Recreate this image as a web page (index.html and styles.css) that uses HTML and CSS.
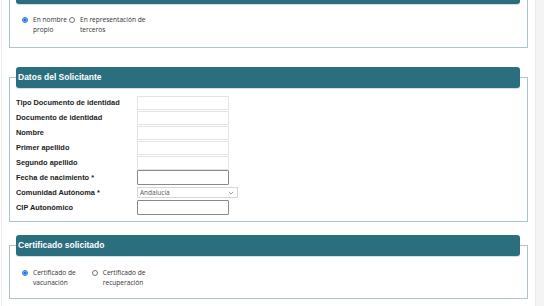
FILE: index.html
```
<!DOCTYPE html>
<html lang="es">
<head>
  <meta charset="UTF-8" />
  <meta name="viewport" content="width=device-width, initial-scale=1.0"/>
  <title>Certificado COVID</title>
  <link rel="stylesheet" href="styles.css">
</head>
<body>
  <div class="pagina">
    <fieldset class="bloque bloque-primero">
      <legend></legend>
      <div class="opciones">
        <label class="opcion"><input type="radio" name="tipo" checked><span>En nombre<br>propio</span></label>
        <label class="opcion"><input type="radio" name="tipo"><span>En representación de<br>terceros</span></label>
      </div>
    </fieldset>

    <fieldset class="bloque bloque-datos">
      <legend>Datos del Solicitante</legend>
      <div class="filas">
        <label>Tipo Documento de identidad</label>
        <input type="text" class="campo">
        <label>Documento de identidad</label>
        <input type="text" class="campo">
        <label>Nombre</label>
        <input type="text" class="campo">
        <label>Primer apellido</label>
        <input type="text" class="campo">
        <label>Segundo apellido</label>
        <input type="text" class="campo">
        <label>Fecha de nacimiento *</label>
        <input type="text" class="campo campo-editable">
        <label>Comunidad Autónoma *</label>
        <div class="selector">
          <select>
            <option>Andalucía</option>
          </select>
          <svg class="flecha" width="6" height="4" viewBox="0 0 6 4"><path d="M0.8 0.8 L3 3 L5.2 0.8" fill="none" stroke="#888" stroke-width="0.8"/></svg>
        </div>
        <label>CIP Autonómico</label>
        <input type="text" class="campo campo-editable">
      </div>
    </fieldset>

    <fieldset class="bloque bloque-certificado">
      <legend>Certificado solicitado</legend>
      <div class="opciones separadas">
        <label class="opcion"><input type="radio" name="cert" checked><span>Certificado de<br>vacunación</span></label>
        <label class="opcion"><input type="radio" name="cert"><span>Certificado de<br>recuperación</span></label>
      </div>
    </fieldset>
  </div>
  <div class="barra"></div>
</body>
</html>
```

FILE: styles.css
```
html, body {
  height: 100%;
}
body {
  margin: 0;
  display: flex;
  background: #ffffff;
  font-family: 'Liberation Sans', Arial, sans-serif;
  color: #222;
  overflow: hidden;
}
.pagina {
  flex: 1;
  margin-left: 1px;
  border-left: 1px solid #ececec;
  padding: 0 7px 0 7px;
}
.barra {
  width: 8px;
  background: #f4f4f4;
  border-left: 1px solid #ebebeb;
}

.bloque {
  border: 1px solid #a9c4cb;
  margin: 0;
  padding: 0 7px 0 6px;
}
.bloque legend {
  box-sizing: border-box;
  width: 100%;
  height: 21px;
  line-height: 21px;
  padding: 0 2px;
  background: #2b6e7e;
  color: #fff;
  font-weight: bold;
  font-size: 8.5px;
  border-radius: 3px;
  box-shadow: 0 1px 0 #cfe0e4;
}
.bloque-primero {
  margin-top: -17px;
  padding-top: 11px;
  padding-bottom: 12px;
}
.bloque-datos {
  margin-top: 19px;
  padding-top: 7px;
  padding-bottom: 6px;
}
.bloque-certificado {
  margin-top: 13px;
  padding-top: 12px;
  padding-bottom: 10px;
}

.opciones {
  display: flex;
  gap: 2px;
  padding-left: 6px;
  font-family: 'Open Sans', 'Noto Sans', sans-serif;
  font-size: 6.6px;
  line-height: 10px;
  color: #333;
}
.opciones.separadas {
  gap: 16px;
}
.opcion {
  display: flex;
  align-items: flex-start;
}
.opcion input {
  width: 6px;
  height: 6px;
  margin: 2px 5px 0 0;
  accent-color: #1a73e8;
}

.filas {
  display: grid;
  grid-template-columns: 121px auto;
  grid-auto-rows: 15px;
  align-items: center;
  justify-items: start;
}
.filas label {
  font-size: 7.4px;
  font-weight: bold;
  color: #222;
}
.campo {
  box-sizing: border-box;
  width: 92px;
  height: 14px;
  margin: 0;
  padding: 0 2px;
  border: 1px solid #e3e3e3;
  background: #fff;
}
.campo-editable {
  height: 15px;
  border-color: #8a8a8a;
  border-radius: 1px;
}
.selector {
  position: relative;
  display: flex;
}
.selector select {
  appearance: none;
  box-sizing: border-box;
  width: 101px;
  height: 11px;
  margin: 0;
  padding: 0 2px;
  border: 1px solid #d6d6d6;
  background: #fff;
  font-family: 'Open Sans', 'Noto Sans', sans-serif;
  font-size: 6.5px;
  line-height: 9px;
  color: #555;
}
.flecha {
  position: absolute;
  right: 4px;
  top: 4px;
}
```
